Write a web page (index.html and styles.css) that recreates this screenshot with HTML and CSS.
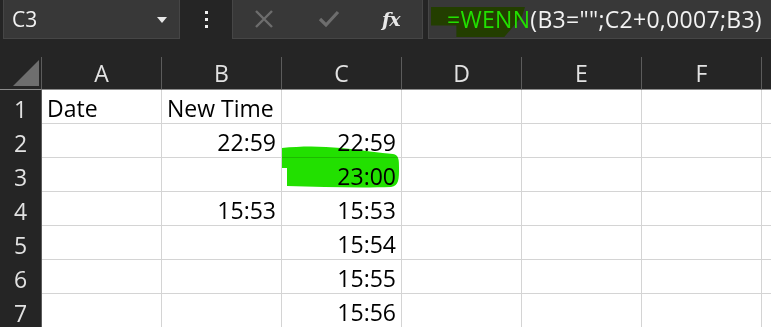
FILE: index.html
```html
<!doctype html>
<html lang="en">
    <head>
        <meta charset="UTF-8" />
        <meta name="viewport" content="width=device-width, initial-scale=1.0" />
        <title>Sheet</title>
        <link rel="stylesheet" href="styles.css">
    </head>
    <body>
        <!-- Formula bar: name box, menu dots, buttons, formula input -->
        <div class="formula-bar">
            <div class="name-box">
                <span>C3</span>
                <svg class="caret" width="10" height="6" viewBox="0 0 10 6"><path d="M0 0h10L5 6z" fill="#e8e8e8"/></svg>
            </div>
            <div class="dots"><i></i><i></i><i></i></div>
            <div class="fx-buttons">
                <svg class="btn" width="20" height="20" viewBox="0 0 20 20"><path d="M2 2L18 18M18 2L2 18" stroke="#6d6d6d" stroke-width="2.4"/></svg>
                <svg class="btn" width="22" height="20" viewBox="0 0 22 20"><path d="M2 10l6 6L20 3" stroke="#6d6d6d" stroke-width="3.2" fill="none"/></svg>
                <span class="fx">fx</span>
            </div>
            <div class="formula-input">
                <span class="mark"></span>
                <span class="fn">=WENN</span><span>(B3="";C2+0,0007;B3)</span>
            </div>
        </div>

        <div class="sheet">
            <div class="corner"><span class="tri"></span></div>
            <div class="col-head">A</div>
            <div class="col-head">B</div>
            <div class="col-head">C</div>
            <div class="col-head">D</div>
            <div class="col-head">E</div>
            <div class="col-head">F</div>
            <div class="col-head"></div>

            <div class="row-head">1</div>
            <div class="cell">Date</div>
            <div class="cell">New Time</div>
            <div class="cell"></div><div class="cell"></div><div class="cell"></div><div class="cell"></div><div class="cell"></div>

            <div class="row-head">2</div>
            <div class="cell"></div>
            <div class="cell num">22:59</div>
            <div class="cell num">22:59</div>
            <div class="cell"></div><div class="cell"></div><div class="cell"></div><div class="cell"></div>

            <div class="row-head">3</div>
            <div class="cell"></div>
            <div class="cell"></div>
            <div class="cell num">23:00</div>
            <div class="cell"></div><div class="cell"></div><div class="cell"></div><div class="cell"></div>

            <div class="row-head">4</div>
            <div class="cell"></div>
            <div class="cell num">15:53</div>
            <div class="cell num">15:53</div>
            <div class="cell"></div><div class="cell"></div><div class="cell"></div><div class="cell"></div>

            <div class="row-head">5</div>
            <div class="cell"></div>
            <div class="cell"></div>
            <div class="cell num">15:54</div>
            <div class="cell"></div><div class="cell"></div><div class="cell"></div><div class="cell"></div>

            <div class="row-head">6</div>
            <div class="cell"></div>
            <div class="cell"></div>
            <div class="cell num">15:55</div>
            <div class="cell"></div><div class="cell"></div><div class="cell"></div><div class="cell"></div>

            <div class="row-head">7</div>
            <div class="cell"></div>
            <div class="cell"></div>
            <div class="cell num">15:56</div>
            <div class="cell"></div><div class="cell"></div><div class="cell"></div><div class="cell"></div>

            <!-- green highlighter stroke drawn over C3 -->
            <svg class="scribble" width="120" height="44" viewBox="0 0 120 44">
                <path d="M1 2 C20 0 40 0 60 2 C80 4 100 7 112 8 C118 9 118 14 118 22 C118 32 118 40 110 41 C80 42 40 41 6 40 L6 22 L1 22 Z" fill="#22e000"/>
            </svg>
        </div>
    </body>
</html>
```

FILE: styles.css
```css
:root {
    --bg: #252525;
    --box: #383838;
    --box-border: #464646;
    --head-text: #e2e2e2;
    --grid: #d4d4d4;
    --green: #22e000;
}

body {
    margin: 0;
    background-color: var(--bg);
    font-family: "Open Sans", "Noto Sans", sans-serif;
    overflow: hidden;
    height: 327px;
}

.formula-bar {
    display: flex;
    align-items: stretch;
    height: 39px;
    padding-left: 3px;
}
.name-box {
    width: 177px;
    background-color: var(--box);
    border: 1px solid var(--box-border);
    border-top: none;
    display: flex;
    align-items: center;
    justify-content: space-between;
    padding: 0 12px 0 8px;
    box-sizing: border-box;
    color: #f2f2f2;
    font-size: 21px;
}
.caret {
    margin-top: 2px;
}
.dots {
    width: 52px;
    display: flex;
    flex-direction: column;
    align-items: center;
    justify-content: center;
    gap: 4px;
}
.dots i {
    width: 3px;
    height: 3px;
    background-color: #f0f0f0;
}
.fx-buttons {
    width: 191px;
    background-color: var(--box);
    border: 1px solid var(--box-border);
    border-top: none;
    box-sizing: border-box;
    display: flex;
    align-items: center;
    padding-left: 21px;
}
.fx-buttons .btn:first-child {
    margin-right: 44px;
}
.fx-buttons .btn:nth-child(2) {
    margin-right: 42px;
}
.fx {
    font-family: "DejaVu Serif", "Liberation Serif", serif;
    font-style: italic;
    font-weight: bold;
    color: #e8e8e8;
    font-size: 19px;
    letter-spacing: -1px;
}
.formula-input {
    flex: 1;
    margin-left: 5px;
    background-color: var(--box);
    border: 1px solid var(--box-border);
    border-top: none;
    border-right: none;
    position: relative;
    display: flex;
    align-items: center;
    padding-left: 18px;
    color: #f2f2f2;
    font-size: 23px;
    letter-spacing: 0.3px;
    white-space: nowrap;
}
.formula-input span {
    position: relative;
}
.formula-input .fn {
    color: var(--green);
}
.formula-input .mark {
    position: absolute;
    left: 2px;
    top: 7px;
    width: 94px;
    height: 30px;
    background-color: #233e00;
    clip-path: polygon(0 0, 100% 0, 97% 30%, 78% 100%, 27% 100%, 27% 62%, 0 62%);
}

.sheet {
    margin-top: 18px;
    display: grid;
    grid-template-columns: 42px repeat(6, 120px) 1fr;
    grid-template-rows: 33px repeat(7, 34px);
    position: relative;
    font-size: 23px;
}
.corner {
    position: relative;
    border-right: 1px solid #5c5c5c;
    border-bottom: 1px solid #8c8c8c;
}
.tri {
    position: absolute;
    left: 13px;
    top: 3px;
    width: 26px;
    height: 26px;
    background-color: #6e6e6e;
    clip-path: polygon(100% 0, 100% 100%, 0 100%);
}
.col-head {
    color: var(--head-text);
    text-align: center;
    line-height: 32px;
    border-right: 1px solid #5c5c5c;
    border-bottom: 1px solid #8c8c8c;
}
.row-head {
    color: var(--head-text);
    text-align: center;
    line-height: 34px;
    padding-top: 2px;
    box-sizing: border-box;
    background-color: var(--bg);
    border-right: 1px solid #5c5c5c;
}
.cell {
    background-color: white;
    color: black;
    line-height: 33px;
    padding: 2px 5px 0;
    box-sizing: border-box;
    border-right: 1px solid var(--grid);
    border-bottom: 1px solid var(--grid);
    white-space: nowrap;
    overflow: hidden;
}
.cell.num {
    text-align: right;
}
.scribble {
    position: absolute;
    left: 281px;
    top: 89px;
    mix-blend-mode: multiply;
}
```
